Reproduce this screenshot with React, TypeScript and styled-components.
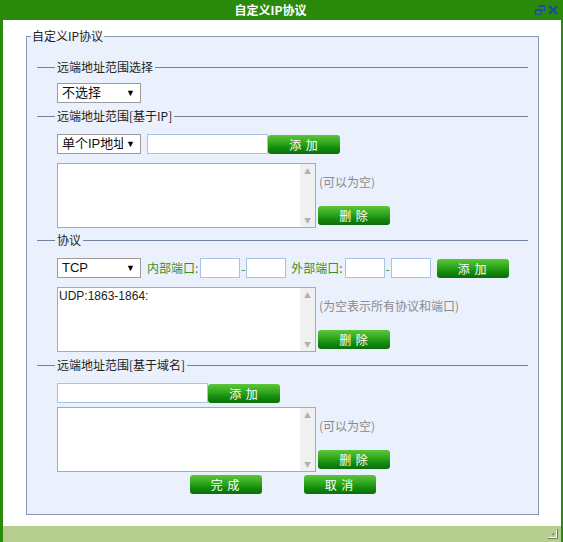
import React from 'react';
import styled, { createGlobalStyle } from 'styled-components';

const Global = createGlobalStyle`
  html, body { margin: 0; padding: 0; background: #fff; }
  body {
    font-family: "Noto Sans CJK SC", "Liberation Sans", sans-serif;
    font-size: 12px;
    color: #222;
  }
`;

const Window = styled.div`
  width: 563px;
  height: 542px;
  box-sizing: border-box;
  background: #2b8a0c;
  padding: 0 2px 0 3px;
  display: flex;
  flex-direction: column;
`;

const TitleBar = styled.div`
  height: 20px;
  margin: 0 -2px 0 -3px;
  display: grid;
  grid-template-columns: 1fr auto 1fr;
  align-items: center;
  color: #fff;
  font-weight: bold;
  font-size: 12px;
`;

const Title = styled.div`
  grid-column: 2;
  padding-right: 22px;
  line-height: 20px;
`;

const TitleIcons = styled.div`
  grid-column: 3;
  justify-self: end;
  display: flex;
  gap: 3px;
  padding-right: 5px;
  align-items: center;
`;

const Body = styled.div`
  flex: 1;
  background: #fff;
  display: flex;
  flex-direction: column;
`;

const Fieldset = styled.fieldset`
  margin: 9px 0 0 23px;
  width: 513px;
  box-sizing: border-box;
  border: 1px solid #8796b0;
  background: #ebf1fc;
  padding: 16px 10px 20px 10px;
  min-width: 0;
`;

const Legend = styled.legend`
  font-size: 12px;
  line-height: 14px;
  padding: 0 1px;
  margin-left: -6px;
  color: #222;
`;

const SectionHead = styled.div<{ $mt: number }>`
  display: flex;
  align-items: center;
  height: 16px;
  margin-top: ${(p) => p.$mt}px;
  &::before {
    content: '';
    width: 18px;
    height: 1px;
    background: #71829e;
  }
  &::after {
    content: '';
    flex: 1;
    height: 1px;
    background: #71829e;
  }
`;

const HeadText = styled.span`
  margin: 0 2px;
  line-height: 16px;
  font-size: 12px;
`;

const Row = styled.div<{ $mt: number }>`
  display: flex;
  align-items: center;
  height: 20px;
  padding-left: 20px;
  margin-top: ${(p) => p.$mt}px;
`;

const SelectBox = styled.div`
  width: 84px;
  height: 20px;
  box-sizing: border-box;
  border: 1px solid #9c9c9c;
  background: #fff;
  display: flex;
  align-items: center;
  padding: 0 5px 0 4px;
  font-family: "Liberation Sans", "Noto Sans CJK SC", sans-serif;
  font-size: 13px;
  color: #111;
  overflow: hidden;
`;

const SelectText = styled.span`
  flex: 1;
  white-space: nowrap;
  overflow: hidden;
  line-height: 18px;
`;

const Arrow = styled.span`
  font-size: 9px;
  margin-left: 3px;
  color: #000;
`;

const TextInput = styled.input<{ $w: number; $ml?: number }>`
  width: ${(p) => p.$w}px;
  height: 20px;
  box-sizing: border-box;
  border: 1px solid #a9c3e6;
  background: #fff;
  margin: 0 0 0 ${(p) => p.$ml ?? 0}px;
  padding: 0 2px;
  outline: none;
`;

const GreenLabel = styled.span<{ $ml: number }>`
  color: #3c8c1e;
  margin-left: ${(p) => p.$ml}px;
  font-size: 12px;
  line-height: 20px;
  white-space: nowrap;
`;

const Dash = styled.span`
  color: #3c8c1e;
  width: 6px;
  text-align: center;
  font-size: 12px;
`;

const Button = styled.button<{ $ml?: number }>`
  width: 72px;
  height: 19px;
  margin-left: ${(p) => p.$ml ?? 0}px;
  border: none;
  border-radius: 3px;
  padding: 0;
  background: linear-gradient(to bottom, #5cc63a 0%, #2da51a 45%, #14890f 70%, #0a6f09 100%);
  color: #fff;
  font-family: "Noto Sans CJK SC", sans-serif;
  font-size: 12px;
  line-height: 19px;
  letter-spacing: 1px;
  cursor: pointer;
`;

const ListRow = styled.div<{ $mt: number }>`
  display: flex;
  padding-left: 20px;
  margin-top: ${(p) => p.$mt}px;
`;

const ListFrame = styled.div`
  width: 259px;
  height: 65px;
  box-sizing: border-box;
  border: 1px solid #a3aabb;
  background: #fff;
  display: flex;
`;

const ListBox = styled.textarea`
  flex: 1;
  min-width: 0;
  border: none;
  background: #fff;
  resize: none;
  overflow: hidden;
  margin: 0;
  padding: 1px 1px;
  font-family: "Liberation Sans", sans-serif;
  font-size: 12px;
  line-height: 15px;
  color: #222;
  outline: none;
`;

const ScrollTrack = styled.div`
  width: 15px;
  background: #f0f0f0;
  display: flex;
  flex-direction: column;
  justify-content: space-between;
  align-items: center;
  padding: 3px 0 3px;
  box-sizing: border-box;
`;

const ScrollArrow = styled.span`
  font-size: 7px;
  line-height: 8px;
  color: #b0b0b0;
`;

const SideCol = styled.div`
  display: flex;
  flex-direction: column;
  justify-content: space-between;
  align-items: flex-start;
  padding: 12px 0 3px 2px;
`;

const Note = styled.span`
  color: #8a8a8a;
  font-size: 12px;
  line-height: 14px;
  margin-left: 1px;
`;

const Actions = styled.div`
  display: flex;
  justify-content: center;
  gap: 42px;
  margin-top: 3px;
`;

const BottomBar = styled.div`
  height: 16px;
  background: #b5cd8f;
  display: flex;
  justify-content: flex-end;
  align-items: flex-end;
  padding: 0 3px 3px 0;
  box-sizing: border-box;
`;

const RestoreIcon = () => (
  <svg width="10" height="10" viewBox="0 0 10 10">
    <rect x="4" y="0.5" width="5.5" height="5" fill="none" stroke="#1d4a9c" />
    <rect x="4" y="0" width="6" height="2" fill="#1d4a9c" />
    <rect x="0.5" y="4.5" width="5.5" height="5" fill="#2b8a0c" stroke="#1d4a9c" />
    <rect x="0" y="4" width="6.5" height="2" fill="#1d4a9c" />
  </svg>
);

const CloseIcon = () => (
  <svg width="10" height="10" viewBox="0 0 10 10">
    <path d="M1 1 L9 9 M9 1 L1 9" stroke="#1d4a9c" strokeWidth="2.2" />
  </svg>
);

const Grip = () => (
  <svg width="10" height="10" viewBox="0 0 10 10">
    <path d="M1 8.5 H8.5 V1" fill="none" stroke="#ffffff" strokeWidth="1" />
    <path d="M0 9.5 H9.5 V0" fill="none" stroke="#6b7d55" strokeWidth="1" />
    <path d="M4 5.5 H5.5 V4" fill="none" stroke="#6b7d55" strokeWidth="1" />
  </svg>
);

const Select = ({ text }: { text: string }) => (
  <SelectBox>
    <SelectText>{text}</SelectText>
    <Arrow>▼</Arrow>
  </SelectBox>
);

const List = ({ value, note }: { value: string; note: string }) => (
  <>
    <ListFrame>
      <ListBox defaultValue={value} />
      <ScrollTrack>
        <ScrollArrow>▲</ScrollArrow>
        <ScrollArrow>▼</ScrollArrow>
      </ScrollTrack>
    </ListFrame>
    <SideCol>
      <Note>{note}</Note>
      <Button>删 除</Button>
    </SideCol>
  </>
);

export default function App() {
  return (
    <>
      <Global />
      <Window>
        <TitleBar>
          <Title>自定义IP协议</Title>
          <TitleIcons>
            <RestoreIcon />
            <CloseIcon />
          </TitleIcons>
        </TitleBar>
        <Body>
          <Fieldset>
            <Legend>自定义IP协议</Legend>

            <SectionHead $mt={0}>
              <HeadText>远端地址范围选择</HeadText>
            </SectionHead>
            <Row $mt={8}>
              <Select text="不选择" />
            </Row>

            <SectionHead $mt={5}>
              <HeadText>远端地址范围[基于IP]</HeadText>
            </SectionHead>
            <Row $mt={10}>
              <Select text="单个IP地址" />
              <TextInput $w={121} $ml={6} />
              <Button>添 加</Button>
            </Row>
            <ListRow $mt={9}>
              <List value="" note="(可以为空)" />
            </ListRow>

            <SectionHead $mt={4}>
              <HeadText>协议</HeadText>
            </SectionHead>
            <Row $mt={10}>
              <Select text="TCP" />
              <GreenLabel $ml={6}>内部端口:</GreenLabel>
              <TextInput $w={40} $ml={2} />
              <Dash>-</Dash>
              <TextInput $w={40} />
              <GreenLabel $ml={5}>外部端口:</GreenLabel>
              <TextInput $w={40} $ml={2} />
              <Dash>-</Dash>
              <TextInput $w={40} />
              <Button $ml={6}>添 加</Button>
            </Row>
            <ListRow $mt={9}>
              <List value="UDP:1863-1864:" note="(为空表示所有协议和端口)" />
            </ListRow>

            <SectionHead $mt={5}>
              <HeadText>远端地址范围[基于域名]</HeadText>
            </SectionHead>
            <Row $mt={10}>
              <TextInput $w={151} />
              <Button>添 加</Button>
            </Row>
            <ListRow $mt={4}>
              <List value="" note="(可以为空)" />
            </ListRow>

            <Actions>
              <Button>完 成</Button>
              <Button>取 消</Button>
            </Actions>
          </Fieldset>
        </Body>
        <BottomBar>
          <Grip />
        </BottomBar>
      </Window>
    </>
  );
}
